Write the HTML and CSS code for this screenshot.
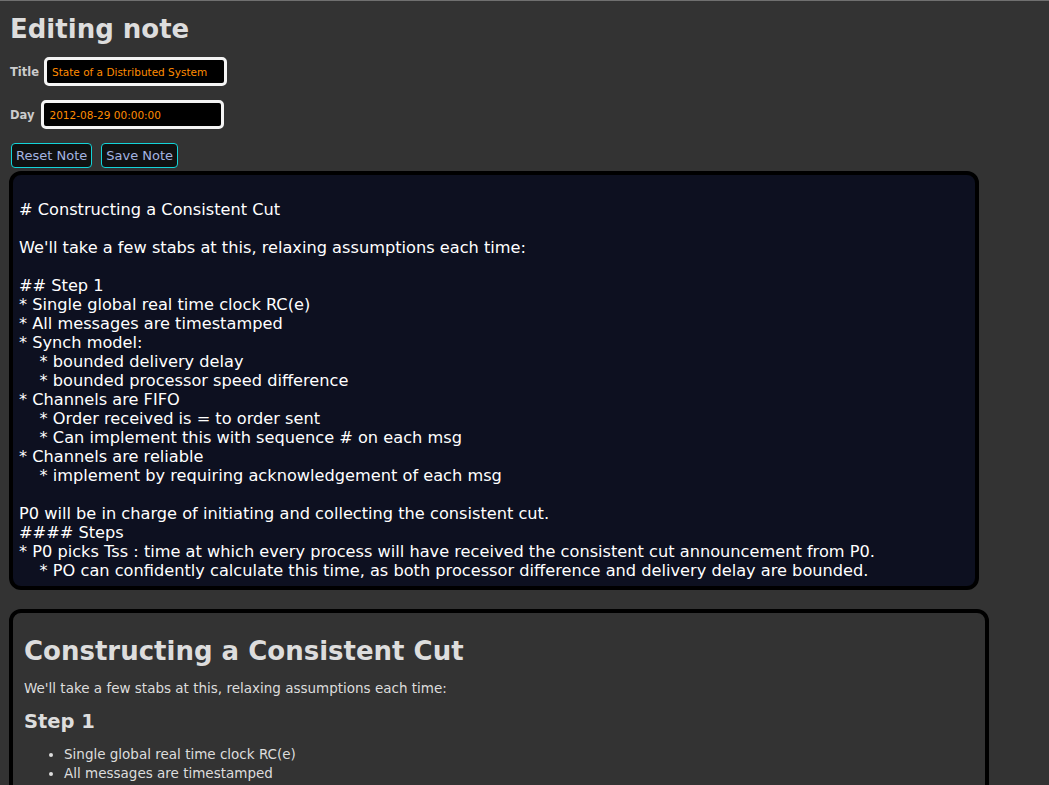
FILE: index.html
```html
<!DOCTYPE html>
<html>
<head>
<meta charset="utf-8">
<link rel="stylesheet" href="styles.css">
</head>
<body>
<div class="page">
  <h1 class="title">Editing note</h1>
  <div class="field field-title">
    <label class="label">Title</label>
    <input class="input input-title" type="text" value="State of a Distributed System">
  </div>
  <div class="field field-day">
    <label class="label">Day</label>
    <input class="input input-day" type="text" value="2012-08-29 00:00:00">
  </div>
  <div class="actions">
    <button class="btn">Reset Note</button>
    <button class="btn">Save Note</button>
  </div>
  <textarea class="editor" spellcheck="false">

# Constructing a Consistent Cut

We'll take a few stabs at this, relaxing assumptions each time:

## Step 1
* Single global real time clock RC(e)
* All messages are timestamped
* Synch model:
    * bounded delivery delay
    * bounded processor speed difference
* Channels are FIFO
    * Order received is = to order sent
    * Can implement this with sequence # on each msg
* Channels are reliable
    * implement by requiring acknowledgement of each msg

P0 will be in charge of initiating and collecting the consistent cut.
#### Steps
* P0 picks Tss : time at which every process will have received the consistent cut announcement from P0.
    * PO can confidently calculate this time, as both processor difference and delivery delay are bounded.</textarea>
  <div class="preview">
    <h1 class="pv-h1">Constructing a Consistent Cut</h1>
    <p class="pv-p">We'll take a few stabs at this, relaxing assumptions each time:</p>
    <h2 class="pv-h2">Step 1</h2>
    <ul class="pv-ul">
      <li>Single global real time clock RC(e)</li>
      <li>All messages are timestamped</li>
    </ul>
  </div>
</div>
</body>
</html>
```
FILE: styles.css
```css
html, body {
  margin: 0;
  padding: 0;
  height: 100%;
  overflow: hidden;
}
body {
  background: #333333;
  font-family: "DejaVu Sans", Verdana, sans-serif;
  color: #dddddd;
  border-top: 1px solid #707070;
  box-sizing: border-box;
}
.page {
  padding: 0 0 0 9px;
}
.title {
  margin: 0;
  padding: 12px 0 0 1px;
  font-size: 26px;
  font-weight: bold;
  line-height: 32px;
  color: #dddddd;
}
.field {
  display: flex;
  align-items: center;
  gap: 7px;
  padding-left: 1px;
}
.field-title { margin-top: 12px; gap: 5px; }
.field-day { margin-top: 14px; }
.label {
  font-size: 11.5px;
  font-weight: bold;
  color: #cccccc;
}
.input {
  box-sizing: border-box;
  height: 29px;
  width: 183px;
  background: #000;
  border: 3px solid #f4f4f4;
  border-radius: 5px;
  color: #ff8c00;
  font-family: "DejaVu Sans", Verdana, sans-serif;
  font-size: 10.5px;
  padding: 0 5px;
  outline: none;
}
.actions {
  display: flex;
  gap: 9px;
  margin-top: 14px;
  padding-left: 2px;
}
.btn {
  box-sizing: border-box;
  height: 25px;
  background: #111;
  border: 1px solid #14d4d8;
  border-radius: 4px;
  color: #a4b4e0;
  font-family: "DejaVu Sans", Verdana, sans-serif;
  font-size: 13px;
  padding: 0 4px;
}
.editor {
  display: block;
  box-sizing: border-box;
  margin-top: 3px;
  width: 970px;
  height: 419px;
  background: #0d1020;
  border: 4px solid #000;
  border-radius: 12px;
  color: #ffffff;
  font-family: "DejaVu Sans", Verdana, sans-serif;
  font-size: 16.2px;
  line-height: 19px;
  padding: 6px 6px;
  resize: none;
  overflow: hidden;
  outline: none;
  white-space: pre-wrap;
}
.preview {
  box-sizing: border-box;
  margin-top: 19px;
  width: 980px;
  height: 400px;
  background: #333;
  border: 4px solid #000;
  border-radius: 12px;
  padding: 22px 11px;
}
.pv-h1 {
  margin: 0;
  font-size: 26px;
  line-height: 32px;
  font-weight: bold;
  color: #dddddd;
}
.pv-p {
  margin: 13px 0 0;
  font-size: 13.5px;
  line-height: 17px;
  color: #dddddd;
}
.pv-h2 {
  margin: 13px 0 0;
  font-size: 19.5px;
  line-height: 24px;
  font-weight: bold;
  color: #dddddd;
}
.pv-ul {
  margin: 11px 0 0;
  padding-left: 40px;
  font-size: 13.5px;
  line-height: 19px;
  color: #dddddd;
}
```
